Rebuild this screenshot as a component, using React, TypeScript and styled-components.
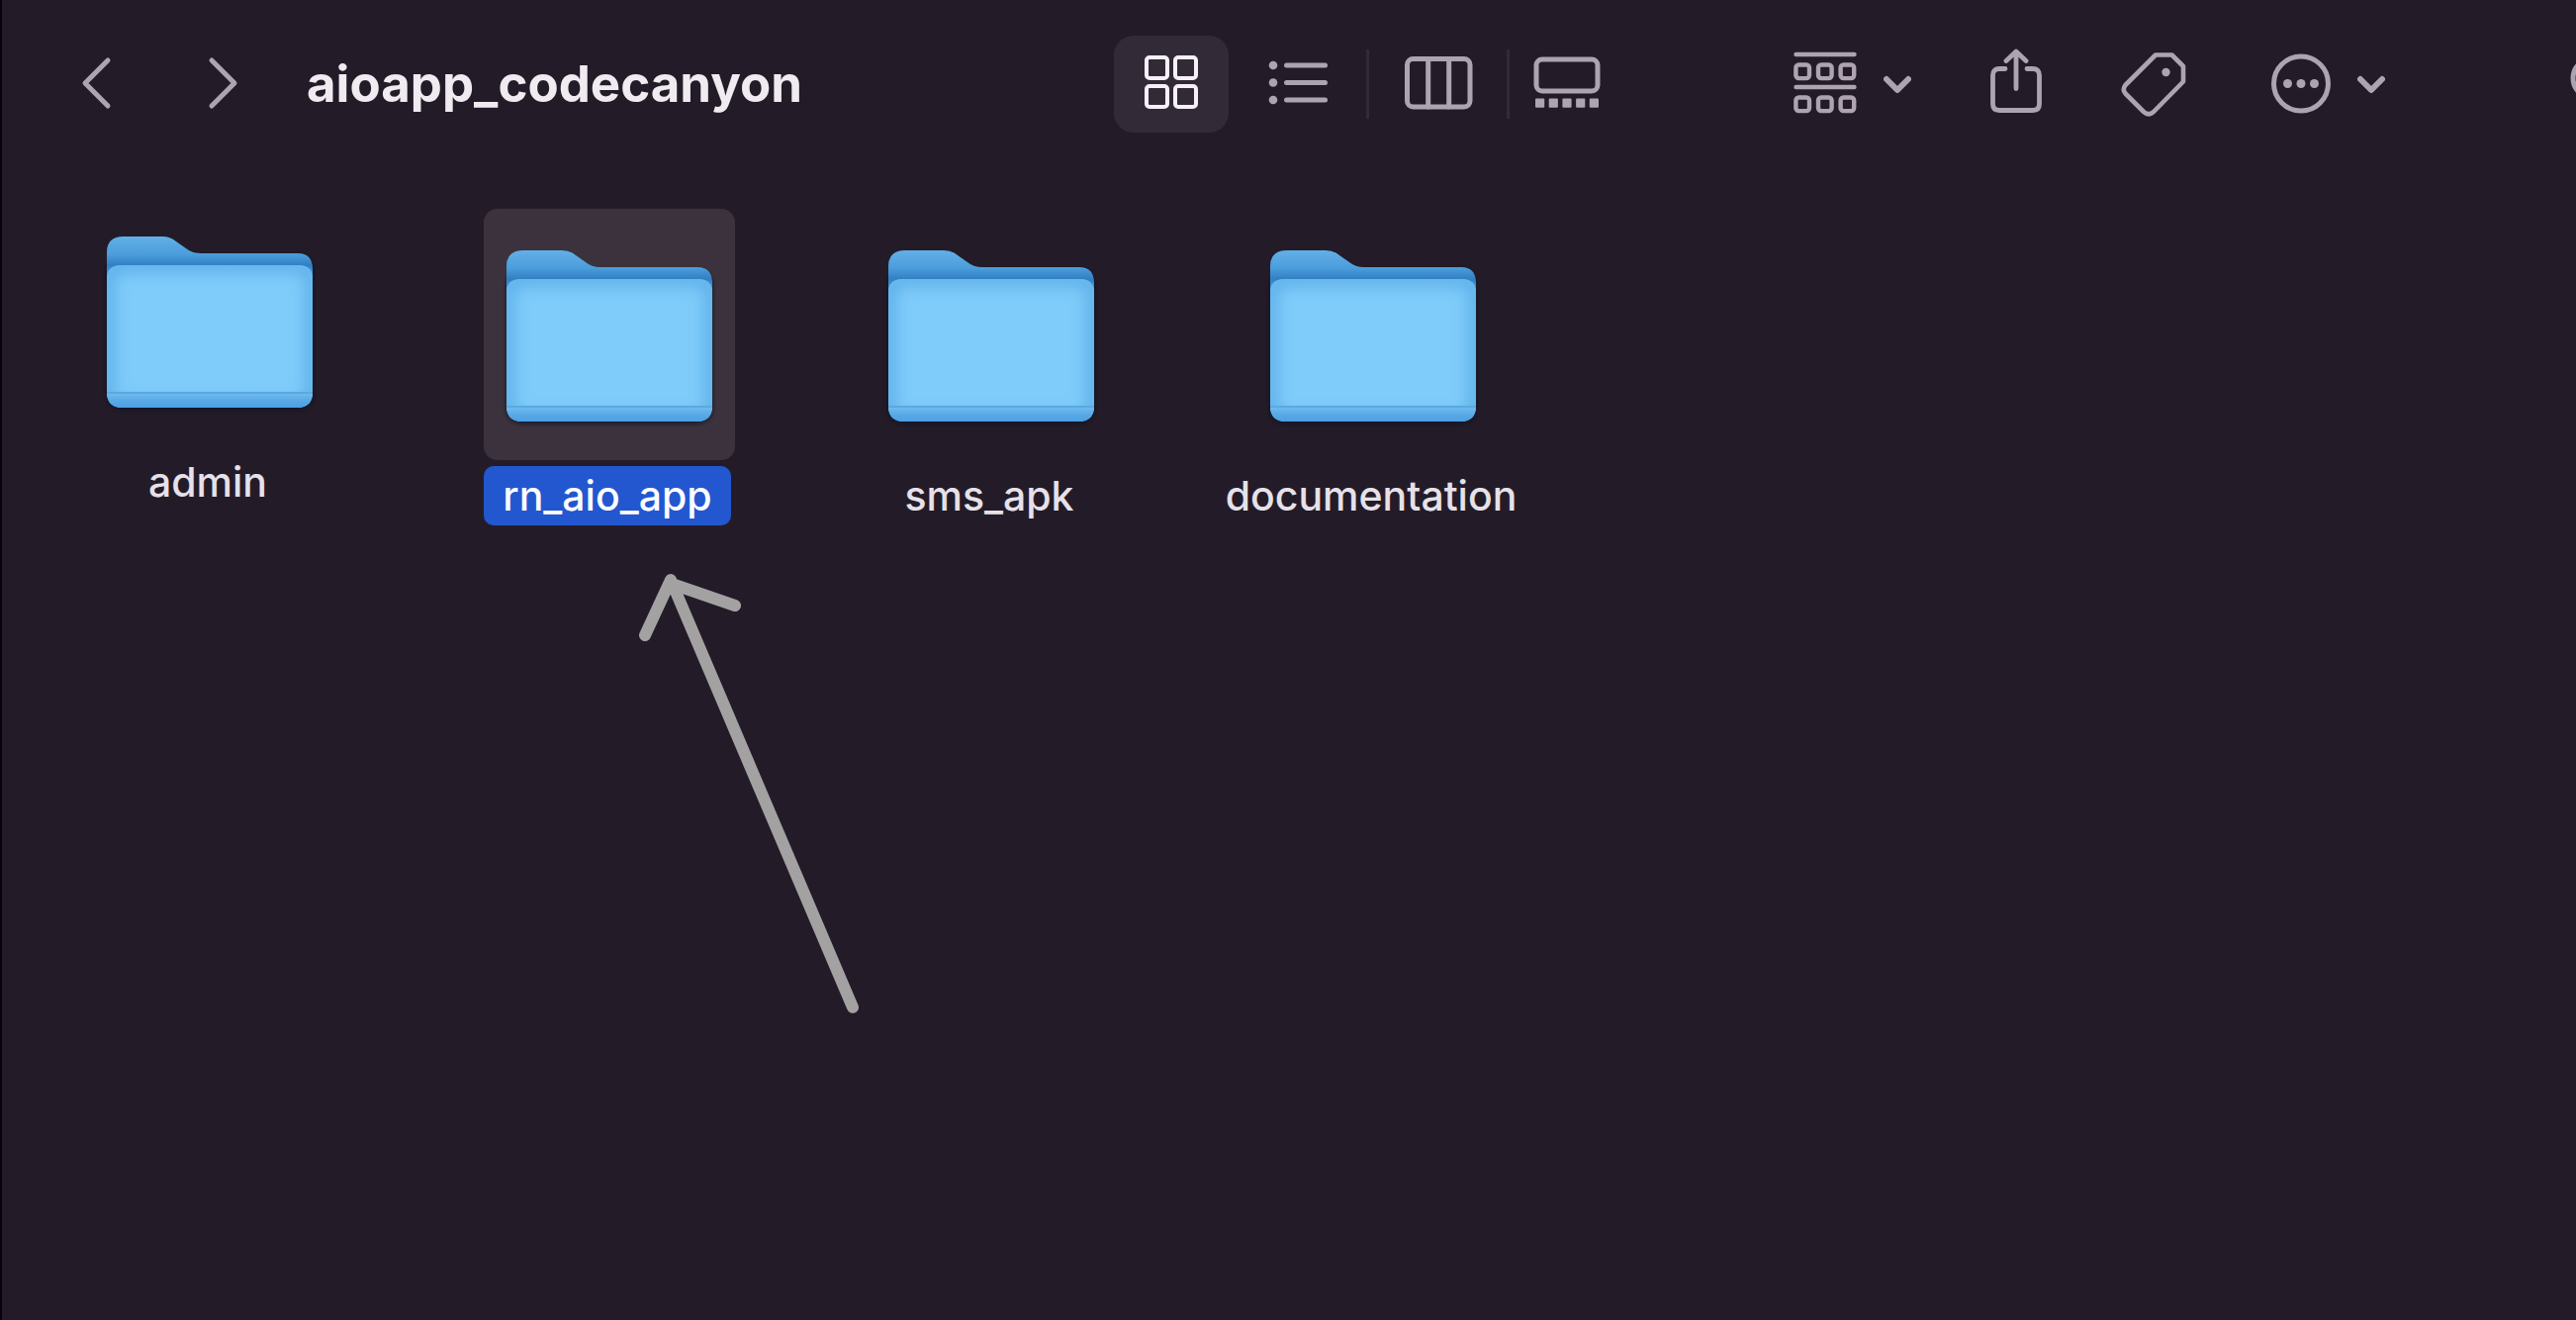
import React, { useState } from "react";
import styled, { createGlobalStyle } from "styled-components";

const color = {
  window: "#231c28",
  edge: "#08020c",
  icon: "#ada3b1",
  iconActive: "#f6f0f9",
  active: "#322b37",
  divider: "#322b37",
  title: "#efebf0",
  label: "#e6e1e9",
  tile: "#3b323d",
  accent: "#2357cf",
  annotation: "#a3a1a2",
};

const GlobalStyle = createGlobalStyle`
  * { box-sizing: border-box; }
  body {
    margin: 0;
    background: ${color.window};
    font-family: Inter, "Liberation Sans", sans-serif;
  }
`;

const Window = styled.main`
  position: relative;
  min-height: 100vh;
  border-left: 2px solid ${color.edge};
  background: ${color.window};
  overflow: hidden;
`;

const Toolbar = styled.header`
  display: flex;
  align-items: center;
  height: 170px;
  padding-left: 79px;
`;

const Navigation = styled.nav`
  display: flex;
  flex: 1;
  align-items: center;
  min-width: 0;
`;

const IconButton = styled.button`
  display: flex;
  flex: none;
  align-items: center;
  gap: 27px;
  padding: 0;
  border: 0;
  background: none;
  color: ${color.icon};
`;

const NavButtons = styled.div`
  display: flex;
  gap: 94px;
  margin-right: 67px;
`;

const Title = styled.h1`
  margin: 0;
  color: ${color.title};
  font-size: 51px;
  font-weight: 700;
  line-height: 64px;
  white-space: nowrap;
`;

const ViewSwitcher = styled.div`
  display: flex;
  flex: none;
  align-items: center;
`;

const ViewButton = styled.button<{ $active: boolean; $wide?: boolean }>`
  display: flex;
  align-items: center;
  justify-content: center;
  width: ${(p) => (p.$wide ? 139 : 116)}px;
  height: 98px;
  padding: 0;
  border: 0;
  border-radius: 20px;
  background: ${(p) => (p.$active ? color.active : "transparent")};
  color: ${(p) => (p.$active ? color.iconActive : color.icon)};
`;

const Divider = styled.span`
  width: 3px;
  height: 70px;
  background: ${color.divider};
`;

const Actions = styled.div`
  display: flex;
  flex: none;
  align-items: center;
  gap: 80px;
  margin-left: 171px;
`;

const MoreSlot = styled.div`
  margin-left: 6px;
`;

const SearchPeek = styled.div`
  width: 6px;
  margin-left: 187px;
  overflow: hidden;
`;

const Glyph = styled.svg<{ $weight?: number }>`
  display: block;
  flex: none;
  fill: none;
  stroke: currentColor;
  stroke-width: ${(p) => p.$weight ?? 5};
  stroke-linecap: round;
  stroke-linejoin: round;

  .solid {
    fill: currentColor;
    stroke: none;
  }
`;

const Files = styled.ul`
  display: flex;
  flex-wrap: wrap;
  gap: 132px;
  margin: 0;
  padding: 27px 83px;
  list-style: none;
`;

const FileItem = styled.li<{ $loose?: boolean }>`
  width: 254px;
  margin-top: ${(p) => (p.$loose ? 0 : 14)}px;
  margin-right: ${(p) => (p.$loose ? 18 : 0)}px;
`;

const FileButton = styled.button`
  display: flex;
  flex-direction: column;
  align-items: center;
  gap: 6px;
  width: 100%;
  padding: 0;
  border: 0;
  background: none;
  font-family: inherit;
`;

const Tile = styled.span<{ $selected: boolean }>`
  display: flex;
  align-items: center;
  justify-content: center;
  width: 254px;
  height: 254px;
  padding-top: 2px;
  border-radius: 14px;
  background: ${(p) => (p.$selected ? color.tile : "transparent")};
`;

const Label = styled.span<{ $selected: boolean }>`
  margin-right: 4px;
  padding: 0 19px;
  border-radius: 10px;
  background: ${(p) => (p.$selected ? color.accent : "transparent")};
  color: ${(p) => (p.$selected ? "#ffffff" : color.label)};
  font-size: 41px;
  font-weight: 500;
  line-height: 60px;
  white-space: nowrap;
`;

const Annotation = styled.svg`
  position: absolute;
  top: 569px;
  left: 637px;
  fill: none;
  stroke: ${color.annotation};
  stroke-width: 12;
  stroke-linecap: round;
  stroke-linejoin: round;
  pointer-events: none;
`;

const FolderArt = styled.svg`
  display: block;
  overflow: visible;
`;

const Chevron = () => (
  <Glyph $weight={6} width="28" height="72" viewBox="0 0 28 72">
    <path d="M3 31 14 42 25 31" />
  </Glyph>
);

const NavArrow = ({ forward }: { forward?: boolean }) => (
  <Glyph width="34" height="72" viewBox="0 0 34 72">
    <path d={forward ? "M5 12 28 35 5 58" : "M28 12 5 35 28 58"} />
  </Glyph>
);

const GridIcon = () => (
  <Glyph $weight={4} width="54" height="72" viewBox="0 0 54 72">
    {[2, 31].map((x) =>
      [9, 38].map((y) => (
        <rect key={`${x}-${y}`} x={x} y={y} width="21" height="21" rx="3" />
      ))
    )}
  </Glyph>
);

const ListIcon = () => (
  <Glyph width="60" height="72" viewBox="0 0 60 72">
    {[17, 34.5, 52].map((y) => (
      <g key={y}>
        <circle className="solid" cx="5" cy={y} r="4.3" />
        <path d={`M18.5 ${y}H57.5`} />
      </g>
    ))}
  </Glyph>
);

const ColumnsIcon = () => (
  <Glyph width="70" height="72" viewBox="0 0 70 72">
    <rect x="3.5" y="10.5" width="63.5" height="48.5" rx="6" />
    <path d="M24.7 10.5V59M45.7 10.5V59" />
  </Glyph>
);

const GalleryIcon = () => (
  <Glyph width="68" height="72" viewBox="0 0 68 72">
    <rect x="3" y="11" width="62" height="32" rx="6" />
    {[0, 1, 2, 3, 4].map((i) => (
      <rect key={i} className="solid" x={2 + i * 13.7} y="50.5" width="9.2" height="9.2" rx="1" />
    ))}
  </Glyph>
);

const GroupIcon = () => (
  <Glyph $weight={4.4} width="64" height="72" viewBox="0 0 64 72">
    {[0, 33].map((y) => (
      <g key={y}>
        <path d={`M2.5 ${y + 6}H61.5`} />
        {[0, 22.6, 45.2].map((x) => (
          <rect key={x} x={x + 2.4} y={y + 16.5} width="13.6" height="13.6" rx="3" />
        ))}
      </g>
    ))}
  </Glyph>
);

const ShareIcon = () => (
  <Glyph $weight={4.8} width="52" height="72" viewBox="0 0 52 72">
    <path d="M15 20.5H9Q2.5 20.5 2.5 27V56Q2.5 62.5 9 62.5H43Q49.5 62.5 49.5 56V27Q49.5 20.5 43 20.5H37" />
    <path d="M26 40.5V4M16 12.5 26 3 36 12.5" />
  </Glyph>
);

const TagIcon = () => (
  <Glyph $weight={4.6} width="66" height="72" viewBox="0 0 66 72">
    <path d="M35 6.5H51.5L63 18V33.500L33 64Q28 68.5 23 64L4.5 45.5Q1 41.5 4.5 37Z" />
    <circle className="solid" cx="45.5" cy="24" r="4.2" />
  </Glyph>
);

const MoreIcon = () => (
  <Glyph width="60" height="72" viewBox="0 0 60 72">
    <circle cx="30" cy="35.5" r="27.5" />
    {[16.5, 30, 43.5].map((x) => (
      <circle key={x} className="solid" cx={x} cy="35.5" r="4.5" />
    ))}
  </Glyph>
);

const SearchIcon = () => (
  <Glyph width="60" height="72" viewBox="0 0 60 72">
    <circle cx="23" cy="30" r="20" />
    <path d="M38 45 54 61" />
  </Glyph>
);

const frontShape =
  "M0 43Q0 29 14 29H194Q208 29 208 43V157Q208 173 192 173H16Q0 173 0 157Z";

const Folder = ({ id }: { id: string }) => (
  <FolderArt width="208" height="173" viewBox="0 0 208 173" aria-hidden="true">
    <defs>
      <linearGradient id={`${id}-back`} x1="0" y1="0" x2="0" y2="1">
        <stop offset="0" stopColor="#62b0e8" />
        <stop offset="0.3" stopColor="#4b9ddb" />
        <stop offset="0.48" stopColor="#3280c4" />
        <stop offset="0.7" stopColor="#4f9fdc" />
      </linearGradient>
      <linearGradient id={`${id}-base`} x1="0" y1="0" x2="0" y2="1">
        <stop offset="0" stopColor="#6fbbee" />
        <stop offset="0.5" stopColor="#58a9e6" />
        <stop offset="1" stopColor="#4c9fe4" />
      </linearGradient>
      <clipPath id={`${id}-clip`}>
        <path d={frontShape} />
      </clipPath>
      <filter id={`${id}-soft`} x="-20%" y="-20%" width="140%" height="140%">
        <feGaussianBlur stdDeviation="8" />
      </filter>
      <filter id={`${id}-shadow`} x="-10%" y="-10%" width="120%" height="120%">
        <feGaussianBlur stdDeviation="2" />
      </filter>
    </defs>
    <rect x="0" y="20" width="208" height="155" rx="15" fill="#0c1728" opacity="0.8" filter={`url(#${id}-shadow)`} />
    <path
      d="M0 16Q0 0 17 0H56Q64 0 70 5L80 12Q86 17 95 17H193Q208 17 208 33V60H0Z"
      fill={`url(#${id}-back)`}
    />
    <g clipPath={`url(#${id}-clip)`}>
      <rect y="29" width="208" height="144" fill="#7fccfb" />
      <path d={frontShape} fill="none" stroke="#4fa3e0" strokeWidth="14" opacity="0.75" filter={`url(#${id}-soft)`} />
      <rect y="157" width="208" height="2" fill="#5aa9df" />
      <rect y="159" width="208" height="14" fill={`url(#${id}-base)`} />
    </g>
  </FolderArt>
);

const views = [
  { name: "Icons", icon: <GridIcon />, wide: false, divider: false },
  { name: "List", icon: <ListIcon />, wide: true, divider: true },
  { name: "Columns", icon: <ColumnsIcon />, wide: true, divider: true },
  { name: "Gallery", icon: <GalleryIcon />, wide: false, divider: false },
];

const files = ["admin", "rn_aio_app", "sms_apk", "documentation"];

export default function App() {
  const [view, setView] = useState("Icons");
  const [selected, setSelected] = useState("rn_aio_app");

  return (
    <>
      <GlobalStyle />
      <Window>
        <Toolbar>
          <Navigation>
            <NavButtons>
              <IconButton aria-label="Back">
                <NavArrow />
              </IconButton>
              <IconButton aria-label="Forward">
                <NavArrow forward />
              </IconButton>
            </NavButtons>
            <Title>aioapp_codecanyon</Title>
          </Navigation>
          <ViewSwitcher>
            {views.map((v) => (
              <React.Fragment key={v.name}>
                <ViewButton
                  aria-label={v.name}
                  aria-pressed={view === v.name}
                  $active={view === v.name}
                  $wide={v.wide}
                  onClick={() => setView(v.name)}
                >
                  {v.icon}
                </ViewButton>
                {v.divider && <Divider />}
              </React.Fragment>
            ))}
          </ViewSwitcher>
          <Actions>
            <IconButton aria-label="Group">
              <GroupIcon />
              <Chevron />
            </IconButton>
            <IconButton aria-label="Share">
              <ShareIcon />
            </IconButton>
            <IconButton aria-label="Edit tags">
              <TagIcon />
            </IconButton>
            <MoreSlot>
              <IconButton aria-label="More">
                <MoreIcon />
                <Chevron />
              </IconButton>
            </MoreSlot>
          </Actions>
          <SearchPeek>
            <IconButton aria-label="Search">
              <SearchIcon />
            </IconButton>
          </SearchPeek>
        </Toolbar>
        <Files>
          {files.map((name, index) => (
            <FileItem key={name} $loose={index === 0}>
              <FileButton onClick={() => setSelected(name)}>
                <Tile $selected={selected === name}>
                  <Folder id={name} />
                </Tile>
                <Label $selected={selected === name}>{name}</Label>
              </FileButton>
            </FileItem>
          ))}
        </Files>
        <Annotation width="240" height="470" viewBox="0 0 240 470" aria-hidden="true">
          <path d="M223 449 39 17 13 73M43 22 104 43" />
        </Annotation>
      </Window>
    </>
  );
}
